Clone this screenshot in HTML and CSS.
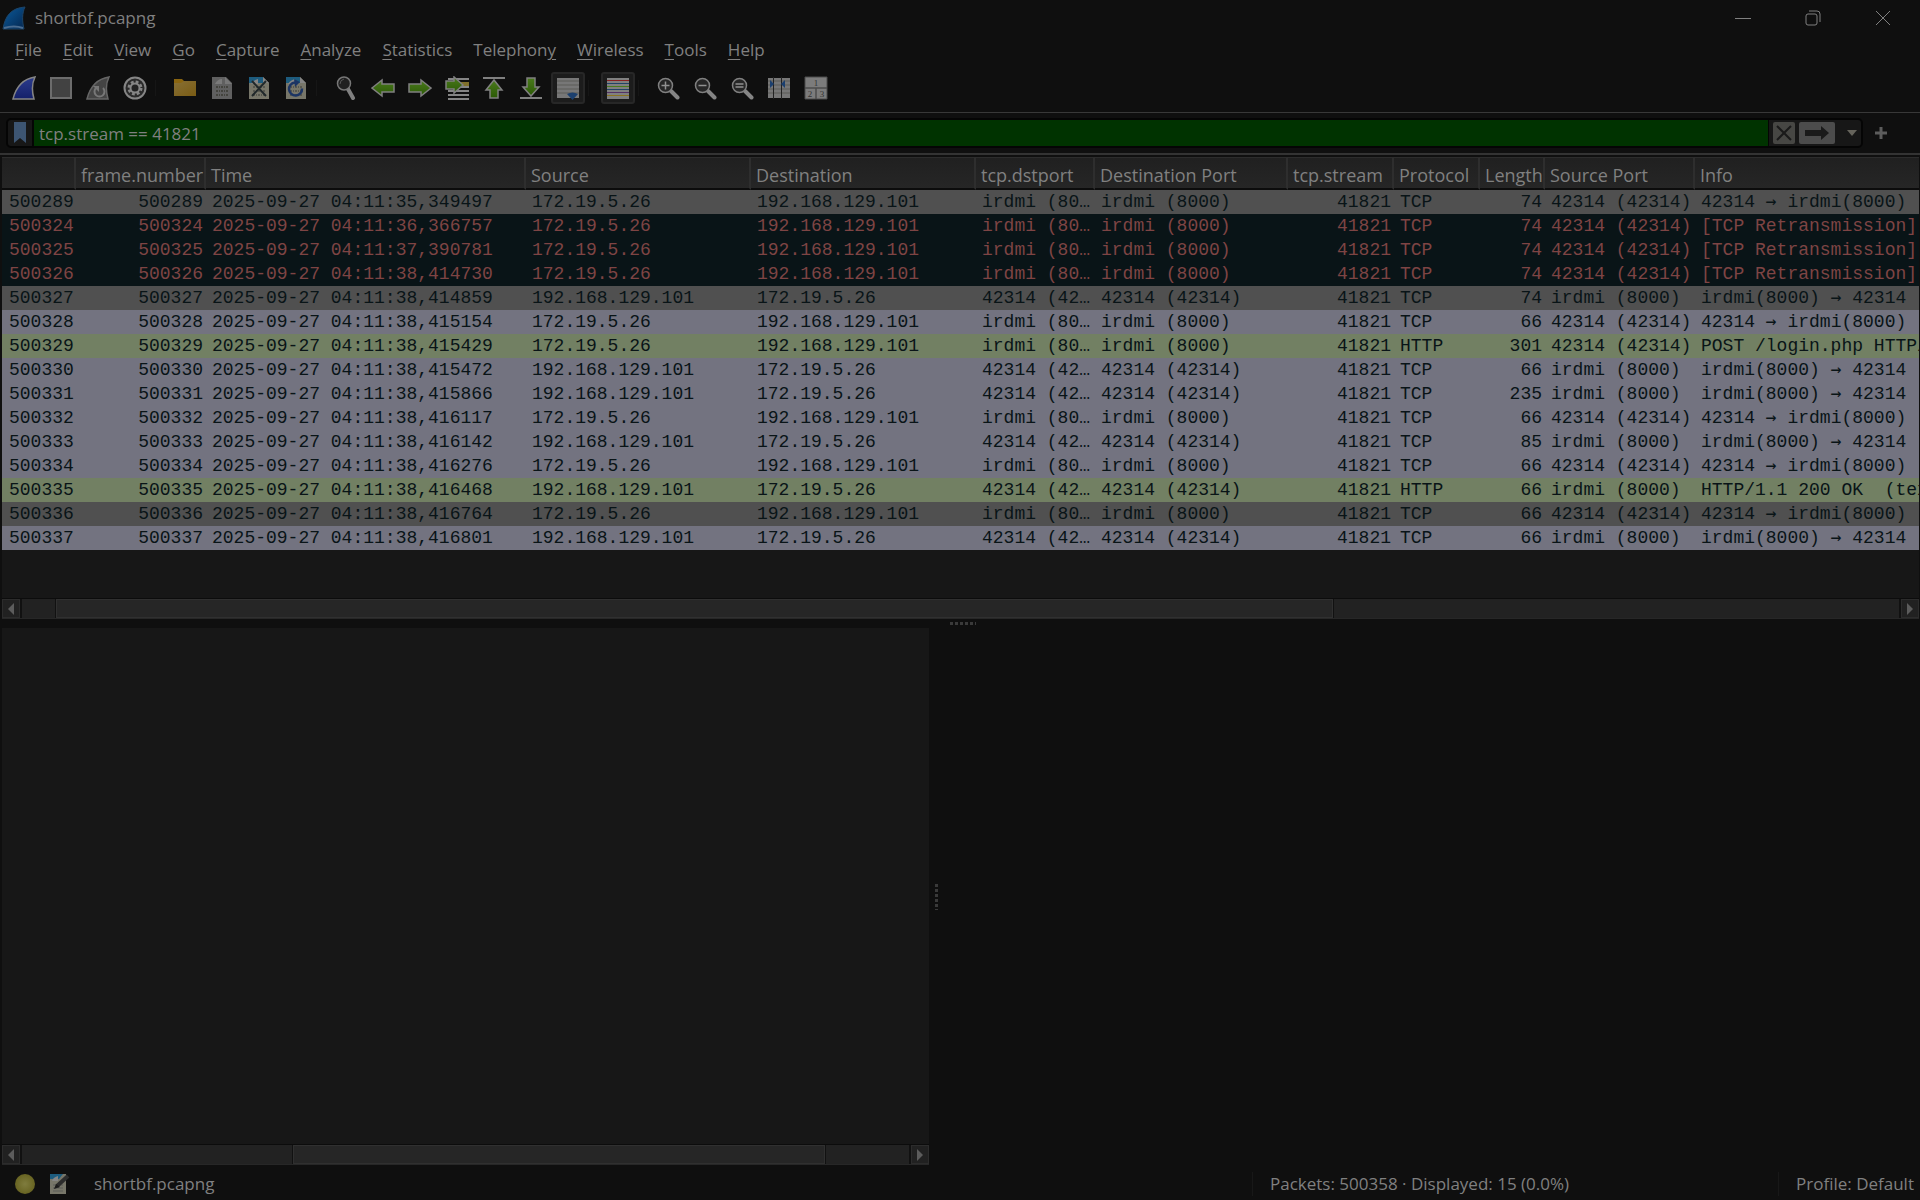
FILE: index.html
```html
<!DOCTYPE html>
<html lang="en">
<head>
<meta charset="utf-8">
<title>shortbf.pcapng</title>
<link rel="stylesheet" href="styles.css">
</head>
<body>
<svg class="defs" aria-hidden="true">
  <defs>
    <linearGradient id="gFin" x1="0" y1="0" x2="1" y2="1"><stop offset="0" stop-color="#0b5b9c"/><stop offset="1" stop-color="#04264f"/></linearGradient>
    <linearGradient id="gBlue" x1="0" y1="0" x2="0" y2="1"><stop offset="0" stop-color="#2c3c8c"/><stop offset="1" stop-color="#14206a"/></linearGradient>
    <linearGradient id="gGreen" x1="0" y1="0" x2="0" y2="1"><stop offset="0" stop-color="#4a7a1c"/><stop offset="1" stop-color="#2c5a06"/></linearGradient>
    <linearGradient id="gFolder" x1="0" y1="0" x2="1" y2="1"><stop offset="0" stop-color="#876f35"/><stop offset="1" stop-color="#7a5c14"/></linearGradient>
    <radialGradient id="gDot"><stop offset="0" stop-color="#7f7c3e"/><stop offset="1" stop-color="#686422"/></radialGradient>
    <g id="bits" fill="none" stroke="#44443e" stroke-width="2" stroke-dasharray="2 1 1 1"><path d="M6 11h13M6 15h13M6 19h13"/></g>
    <g id="lens"><path d="M15 15l6.500 6.500" stroke="#858585" stroke-width="4" stroke-linecap="round"/><circle cx="9.500" cy="9.500" r="7" fill="#262626" stroke="#808080" stroke-width="1.500"/></g>
  </defs>
</svg>

<header class="titlebar">
  <svg class="app-icon" viewBox="0 0 24 24"><path d="M1 23C3 10 9 2 23 1c-3 6-3 14-1 22z" fill="url(#gFin)" stroke="#1c4468"/><path d="M2 22c7-2 13-2 19 0" stroke="#4a6c90" stroke-width="2" fill="none"/></svg>
  <span class="title">shortbf.pcapng</span>
  <div class="window-buttons">
    <button aria-label="Minimize"><svg viewBox="0 0 16 16"><path d="M0 8.500h16"/></svg></button>
    <button aria-label="Restore"><svg viewBox="0 0 16 16"><rect x="1" y="4" width="11" height="11" rx="2"/><path d="M4 1h8q3 0 3 3v8"/></svg></button>
    <button aria-label="Close"><svg viewBox="0 0 16 16"><path d="M1 1l14 14M15 1L1 15"/></svg></button>
  </div>
</header>

<nav class="menubar">
  <button><u>F</u>ile</button><button><u>E</u>dit</button><button><u>V</u>iew</button><button><u>G</u>o</button><button><u>C</u>apture</button><button><u>A</u>nalyze</button><button><u>S</u>tatistics</button><button>Telephon<u>y</u></button><button><u>W</u>ireless</button><button><u>T</u>ools</button><button><u>H</u>elp</button>
</nav>

<div class="toolbar">
  <button aria-label="Start capture"><svg viewBox="0 0 24 24"><path d="M1 23C4 11 10 3 23 1c-3 6-3 15-1 22z" fill="url(#gBlue)" stroke="#858585" stroke-width="1.500"/></svg></button>
  <button aria-label="Stop capture"><svg viewBox="0 0 24 24"><rect x="2" y="2" width="20" height="20" fill="#424242" stroke="#6c6c6c" stroke-width="2"/></svg></button>
  <button aria-label="Restart capture"><svg viewBox="0 0 24 24"><path d="M1 23C4 11 10 3 23 1c-3 6-3 15-1 22z" fill="#444" stroke="#666" stroke-width="1.500"/><path d="M10 12a5 5 0 1 0 7 0" fill="none" stroke="#777" stroke-width="2"/><path d="M7 10h6v6z" fill="#777"/></svg></button>
  <button aria-label="Capture options"><svg viewBox="0 0 24 24"><circle cx="12" cy="12" r="10.500" fill="#2a2a2a" stroke="#858585" stroke-width="2"/><circle cx="12" cy="12" r="6" fill="none" stroke="#858585" stroke-width="3" stroke-dasharray="2.700 2"/><circle cx="12" cy="12" r="4.500" fill="#222" stroke="#858585" stroke-width="2"/></svg></button>
  <span class="sep"></span>
  <button aria-label="Open"><svg viewBox="0 0 24 24"><path d="M1 3h8l2 2v4H1z" fill="#8a6510"/><path d="M1 20V7h7l3-2h12v15z" fill="url(#gFolder)"/></svg></button>
  <button aria-label="Save"><svg viewBox="0 0 24 24"><path d="M2 1h14l6 6v16H2z" fill="#606060"/><path d="M15 1v7h7" fill="#777"/><path d="M5 8c1-3 4-5 7-5v5z" fill="#7a7a7a"/><use href="#bits"/></svg></button>
  <button aria-label="Close file"><svg viewBox="0 0 24 24"><path d="M2 1h14l6 6v16H2z" fill="#777669"/><path d="M2 1h14v6H2z" fill="#1d5c7e"/><path d="M16 1v6h6z" fill="#858585"/><path d="M4 8c2-3 4-4 7-5v5z" fill="#858585"/><use href="#bits" opacity=".6"/><path d="M5 5l14 15M19 5L5 20" stroke="#20282a" stroke-width="2"/></svg></button>
  <button aria-label="Reload file"><svg viewBox="0 0 24 24"><path d="M2 1h14l6 6v16H2z" fill="#777669"/><path d="M2 1h14v6H2z" fill="#1d5c7e"/><path d="M16 1v6h6z" fill="#858585"/><path d="M4 8c2-3 4-4 7-5v5z" fill="#858585"/><use href="#bits" opacity=".6"/><path d="M11 6.500a6.500 6.500 0 1 0 7 6" fill="none" stroke="#1c3564" stroke-width="2.500"/><path d="M10 3l6 3-5 5z" fill="#1c3564"/></svg></button>
  <span class="sep"></span>
  <button aria-label="Find"><svg viewBox="0 0 24 24"><path d="M14 13l5 9" stroke="#808080" stroke-width="4" stroke-linecap="round"/><circle cx="10" cy="7.500" r="6.500" fill="#202020" stroke="#777" stroke-width="1.500"/><path d="M6 8q0-4 4-5" stroke="#555" fill="none"/></svg></button>
  <button aria-label="Go back"><svg viewBox="0 0 24 24"><path d="M1 12l10-8v4h12v8H11v4z" fill="url(#gGreen)" stroke="#808080" stroke-width="1.500"/></svg></button>
  <button aria-label="Go forward"><svg viewBox="0 0 24 24"><path d="M23 12L13 4v4H1v8h12v4z" fill="url(#gGreen)" stroke="#808080" stroke-width="1.500"/></svg></button>
  <button aria-label="Go to packet"><svg viewBox="0 0 24 24"><path d="M3 3h21M3 7h21M3 11h21M3 15h21M3 19h21M3 23h21" stroke="#858585" stroke-width="2"/><path d="M15 6h9v4h-9z" fill="#80702c"/><path d="M18 9L9 1v4H1v8h8v4z" fill="url(#gGreen)" stroke="#808080" stroke-width="1.500"/></svg></button>
  <button aria-label="First packet"><svg viewBox="0 0 24 24"><path d="M1 2h22" stroke="#808080" stroke-width="2"/><path d="M12 4l8 10h-4v8H8v-8H4z" fill="url(#gGreen)" stroke="#808080" stroke-width="1.500"/></svg></button>
  <button aria-label="Last packet"><svg viewBox="0 0 24 24"><path d="M1 22h22" stroke="#808080" stroke-width="2"/><path d="M12 20l8-9h-4V2H8v9H4z" fill="url(#gGreen)" stroke="#808080" stroke-width="1.500"/></svg></button>
  <button class="checked" aria-label="Auto scroll" aria-pressed="true"><svg viewBox="0 0 24 24"><path d="M1 2h22v20H1z" fill="#777"/><path d="M1 5h22M1 9h22M1 13h22M1 17h22" stroke="#5c5c58"/><path d="M11 18q5.500-3 11 0l-5.500 6z" fill="#1b3f6e"/></svg></button>
  <span class="sep"></span>
  <button class="checked" aria-label="Colorize" aria-pressed="true"><svg viewBox="0 0 24 24"><path d="M1 2h22v21H1z" fill="#808080"/><path d="M1 4.500h22" stroke="#822"/><path d="M1 7.500h22" stroke="#246"/><path d="M1 10.500h22" stroke="#4a7a1c"/><path d="M1 13.500h22" stroke="#246"/><path d="M1 16.500h22" stroke="#536"/><path d="M1 19.500h22" stroke="#8a7320"/></svg></button>
  <span class="sep"></span>
  <button aria-label="Zoom in"><svg viewBox="0 0 24 24"><use href="#lens"/><path d="M5.500 9.500h8M9.500 5.500v8" stroke="#909090" stroke-width="1.500"/></svg></button>
  <button aria-label="Zoom out"><svg viewBox="0 0 24 24"><use href="#lens"/><path d="M5.500 9.500h8" stroke="#909090" stroke-width="1.500"/></svg></button>
  <button aria-label="Normal size"><svg viewBox="0 0 24 24"><use href="#lens"/><path d="M5.500 8h8M5.500 11h8" stroke="#909090" stroke-width="1.500"/></svg></button>
  <button aria-label="Resize columns"><svg viewBox="0 0 24 24"><path d="M1 2h22v20H1z" fill="#777"/><path d="M1 5h22M1 9h22M1 13h22M1 17h22" stroke="#5c5c58"/><path d="M6.500 1v22M14.500 1v22" stroke="#222"/><path d="M3 4l4 4-4 4zM18 4l-4 4 4 4z" fill="#1b3f6e"/></svg></button>
  <button aria-label="Layout"><svg viewBox="0 0 24 24"><path d="M1 1h22v11H1zM1 12h11v11H1zM12 12h11v11H12z" fill="#7c7c7c" stroke="#4c4c4c"/><text x="12" y="10">1</text><text x="6" y="21">2</text><text x="18" y="21">3</text></svg></button>
</div>

<div class="filterbar">
  <div class="filter-box">
    <button class="bookmark" aria-label="Saved filters"><svg viewBox="0 0 14 22"><path d="M1 0h12v21l-6-5-6 5z" fill="#3d5572"/></svg></button>
    <input type="text" value="tcp.stream == 41821" aria-label="Display filter" spellcheck="false">
    <button class="clear" aria-label="Clear filter"><svg viewBox="0 0 22 22"><path d="M4 4l14 14M18 4L4 18" stroke="#1a1a1a" stroke-width="2"/></svg></button>
    <button class="apply" aria-label="Apply filter"><svg viewBox="0 0 36 22"><path d="M6 8h16V4l8 7-8 7v-4H6z" fill="#1a1a1a"/></svg></button>
    <button class="recent" aria-label="Recent filters"><svg viewBox="0 0 10 6"><path d="M0 0h10L5 6z" fill="#66645c"/></svg></button>
  </div>
  <button class="add" aria-label="Add filter button"><svg viewBox="0 0 12 12"><path d="M0 6h12M6 0v12" stroke="#5c5c5c" stroke-width="3"/></svg></button>
</div>

<main class="panes">
  <section class="packet-pane">
    <div class="table-wrap">
      <table>
        <colgroup><col class="w-no"><col class="w-frame"><col class="w-time"><col class="w-addr"><col class="w-addr"><col class="w-dstport"><col class="w-destport"><col class="w-stream"><col class="w-proto"><col class="w-length"><col class="w-srcport"><col></colgroup>
        <thead><tr><th></th><th>frame.number</th><th>Time</th><th>Source</th><th>Destination</th><th>tcp.dstport</th><th>Destination Port</th><th>tcp.stream</th><th>Protocol</th><th>Length</th><th>Source Port</th><th>Info</th></tr></thead>
        <tbody>
          <tr class="syn"><td>500289</td><td class="r">500289</td><td>2025-09-27 04:11:35,349497</td><td>172.19.5.26</td><td>192.168.129.101</td><td>irdmi (80…</td><td>irdmi (8000)</td><td class="r">41821</td><td>TCP</td><td class="r">74</td><td>42314 (42314)</td><td class="info">42314 <span class="arrow">→</span> irdmi(8000)</td></tr>
          <tr class="bad"><td>500324</td><td class="r">500324</td><td>2025-09-27 04:11:36,366757</td><td>172.19.5.26</td><td>192.168.129.101</td><td>irdmi (80…</td><td>irdmi (8000)</td><td class="r">41821</td><td>TCP</td><td class="r">74</td><td>42314 (42314)</td><td class="info">[TCP Retransmission]</td></tr>
          <tr class="bad"><td>500325</td><td class="r">500325</td><td>2025-09-27 04:11:37,390781</td><td>172.19.5.26</td><td>192.168.129.101</td><td>irdmi (80…</td><td>irdmi (8000)</td><td class="r">41821</td><td>TCP</td><td class="r">74</td><td>42314 (42314)</td><td class="info">[TCP Retransmission]</td></tr>
          <tr class="bad"><td>500326</td><td class="r">500326</td><td>2025-09-27 04:11:38,414730</td><td>172.19.5.26</td><td>192.168.129.101</td><td>irdmi (80…</td><td>irdmi (8000)</td><td class="r">41821</td><td>TCP</td><td class="r">74</td><td>42314 (42314)</td><td class="info">[TCP Retransmission]</td></tr>
          <tr class="syn"><td>500327</td><td class="r">500327</td><td>2025-09-27 04:11:38,414859</td><td>192.168.129.101</td><td>172.19.5.26</td><td>42314 (42…</td><td>42314 (42314)</td><td class="r">41821</td><td>TCP</td><td class="r">74</td><td>irdmi (8000)</td><td class="info">irdmi(8000) <span class="arrow">→</span> 42314</td></tr>
          <tr class="tcp"><td>500328</td><td class="r">500328</td><td>2025-09-27 04:11:38,415154</td><td>172.19.5.26</td><td>192.168.129.101</td><td>irdmi (80…</td><td>irdmi (8000)</td><td class="r">41821</td><td>TCP</td><td class="r">66</td><td>42314 (42314)</td><td class="info">42314 <span class="arrow">→</span> irdmi(8000)</td></tr>
          <tr class="http"><td>500329</td><td class="r">500329</td><td>2025-09-27 04:11:38,415429</td><td>172.19.5.26</td><td>192.168.129.101</td><td>irdmi (80…</td><td>irdmi (8000)</td><td class="r">41821</td><td>HTTP</td><td class="r">301</td><td>42314 (42314)</td><td class="info">POST /login.php HTTP/</td></tr>
          <tr class="tcp"><td>500330</td><td class="r">500330</td><td>2025-09-27 04:11:38,415472</td><td>192.168.129.101</td><td>172.19.5.26</td><td>42314 (42…</td><td>42314 (42314)</td><td class="r">41821</td><td>TCP</td><td class="r">66</td><td>irdmi (8000)</td><td class="info">irdmi(8000) <span class="arrow">→</span> 42314</td></tr>
          <tr class="tcp"><td>500331</td><td class="r">500331</td><td>2025-09-27 04:11:38,415866</td><td>192.168.129.101</td><td>172.19.5.26</td><td>42314 (42…</td><td>42314 (42314)</td><td class="r">41821</td><td>TCP</td><td class="r">235</td><td>irdmi (8000)</td><td class="info">irdmi(8000) <span class="arrow">→</span> 42314</td></tr>
          <tr class="tcp"><td>500332</td><td class="r">500332</td><td>2025-09-27 04:11:38,416117</td><td>172.19.5.26</td><td>192.168.129.101</td><td>irdmi (80…</td><td>irdmi (8000)</td><td class="r">41821</td><td>TCP</td><td class="r">66</td><td>42314 (42314)</td><td class="info">42314 <span class="arrow">→</span> irdmi(8000)</td></tr>
          <tr class="tcp"><td>500333</td><td class="r">500333</td><td>2025-09-27 04:11:38,416142</td><td>192.168.129.101</td><td>172.19.5.26</td><td>42314 (42…</td><td>42314 (42314)</td><td class="r">41821</td><td>TCP</td><td class="r">85</td><td>irdmi (8000)</td><td class="info">irdmi(8000) <span class="arrow">→</span> 42314</td></tr>
          <tr class="tcp"><td>500334</td><td class="r">500334</td><td>2025-09-27 04:11:38,416276</td><td>172.19.5.26</td><td>192.168.129.101</td><td>irdmi (80…</td><td>irdmi (8000)</td><td class="r">41821</td><td>TCP</td><td class="r">66</td><td>42314 (42314)</td><td class="info">42314 <span class="arrow">→</span> irdmi(8000)</td></tr>
          <tr class="http"><td>500335</td><td class="r">500335</td><td>2025-09-27 04:11:38,416468</td><td>192.168.129.101</td><td>172.19.5.26</td><td>42314 (42…</td><td>42314 (42314)</td><td class="r">41821</td><td>HTTP</td><td class="r">66</td><td>irdmi (8000)</td><td class="info">HTTP/1.1 200 OK  (tex</td></tr>
          <tr class="syn"><td>500336</td><td class="r">500336</td><td>2025-09-27 04:11:38,416764</td><td>172.19.5.26</td><td>192.168.129.101</td><td>irdmi (80…</td><td>irdmi (8000)</td><td class="r">41821</td><td>TCP</td><td class="r">66</td><td>42314 (42314)</td><td class="info">42314 <span class="arrow">→</span> irdmi(8000)</td></tr>
          <tr class="tcp"><td>500337</td><td class="r">500337</td><td>2025-09-27 04:11:38,416801</td><td>192.168.129.101</td><td>172.19.5.26</td><td>42314 (42…</td><td>42314 (42314)</td><td class="r">41821</td><td>TCP</td><td class="r">66</td><td>irdmi (8000)</td><td class="info">irdmi(8000) <span class="arrow">→</span> 42314</td></tr>
        </tbody>
      </table>
    </div>
    <div class="scrollbar list-scroll">
      <button aria-label="Scroll left"><svg viewBox="0 0 6 12"><path d="M6 0v12L0 6z"/></svg></button>
      <div class="track"><span class="before"></span><span class="thumb"></span><span class="after"></span></div>
      <button aria-label="Scroll right"><svg viewBox="0 0 6 12"><path d="M0 0v12l6-6z"/></svg></button>
    </div>
  </section>
  <div class="split-h"><span class="grip"></span></div>
  <section class="lower">
    <div class="detail-pane">
      <div class="detail-tree"></div>
      <div class="scrollbar detail-scroll">
        <button aria-label="Scroll left"><svg viewBox="0 0 6 12"><path d="M6 0v12L0 6z"/></svg></button>
        <div class="track"><span class="before"></span><span class="thumb"></span><span class="after"></span></div>
        <button aria-label="Scroll right"><svg viewBox="0 0 6 12"><path d="M0 0v12l6-6z"/></svg></button>
      </div>
    </div>
    <div class="split-v"><span class="grip"></span></div>
    <div class="bytes-pane"></div>
  </section>
</main>

<footer class="statusbar">
  <div class="status-file">
    <button aria-label="Expert information"><svg viewBox="0 0 22 22"><circle cx="11" cy="11" r="10" fill="url(#gDot)"/></svg></button>
    <button aria-label="Capture comment"><svg viewBox="0 0 22 22"><path d="M1 1h16v20H1z" fill="#777669"/><path d="M1 1h13l-4 5H1z" fill="#1d5c7e"/><path d="M3 8c1-3 3-4 6-5v5z" fill="#858585"/><path d="M4 12h10M4 15h10M4 18h10" stroke="#5c5c58"/><path d="M8 13L19 3" stroke="#2c2c2c" stroke-width="4"/><path d="M5 16l2-5 4 3z" fill="#1c1c1c"/></svg></button>
    <span>shortbf.pcapng</span>
  </div>
  <div class="status-packets">Packets: 500358 · Displayed: 15 (0.0%)</div>
  <button class="status-profile">Profile: Default</button>
</footer>
</body>
</html>
```
FILE: styles.css
```css
* { box-sizing: border-box; }

body {
  margin: 0;
  height: 100vh;
  display: flex;
  flex-direction: column;
  overflow: hidden;
  background: #0f0f0f;
  color: #808080;
  font-family: "Open Sans", "Noto Sans", sans-serif;
  font-size: 17px;
  line-height: 24px;
}

.defs { position: absolute; width: 0; height: 0; }

button {
  margin: 0;
  padding: 0;
  border: 0;
  background: none;
  color: inherit;
  font: inherit;
}

svg { display: block; }

/* Title bar */
.titlebar { display: flex; align-items: center; height: 34px; flex: none; padding: 1px 2px 0; }
.app-icon { width: 24px; height: 24px; }
.title { margin-left: 9px; }
.window-buttons { display: flex; margin-left: auto; }
.window-buttons button { width: 70px; height: 32px; display: grid; place-items: center; }
.window-buttons svg { width: 16px; height: 16px; fill: none; stroke: #808080; }

/* Menu */
.menubar { display: flex; align-items: center; height: 32px; flex: none; padding-left: 4px; }
.menubar button { padding: 0 10px 0 11px; }
.menubar u { text-underline-offset: 3px; text-decoration-thickness: 1px; }

/* Main toolbar */
.toolbar {
  display: flex;
  align-items: center;
  gap: 3px;
  height: 47px;
  flex: none;
  padding: 0 0 2px 7px;
  border-bottom: 1px solid #383838;
}
.toolbar button { width: 34px; height: 32px; display: grid; place-items: center; border-radius: 3px; }
.toolbar svg { width: 24px; height: 24px; }
.toolbar text { font: 9px "Liberation Serif", serif; fill: #333; text-anchor: middle; }
.toolbar .checked { background: #1c1c1c; border: 2px solid #272727; }
.sep { width: 10px; height: 16px; border-left: 1px solid #161616; }

/* Display filter */
.filterbar {
  display: flex;
  align-items: center;
  height: 42px;
  flex: none;
  padding-left: 6px;
  border-bottom: 2px solid #333;
}
.filter-box {
  flex: 1;
  display: flex;
  align-items: center;
  height: 30px;
  border: 2px solid #050505;
  border-radius: 5px;
  background: #171717;
  overflow: hidden;
}
.filter-box input {
  flex: 1;
  min-width: 0;
  height: 26px;
  padding: 0 5px;
  border: 0;
  border-right: 1px solid #050505;
  background: #003300;
  color: #808080;
  font: inherit;
  outline: 0;
}
.bookmark { width: 26px; height: 26px; display: grid; place-items: center; border-right: 2px solid #050505; }
.bookmark svg { width: 14px; height: 22px; }
.clear { margin-left: 4px; background: #474744; border-radius: 2px; }
.clear svg { width: 22px; height: 22px; }
.apply { margin-left: 4px; background: #4c4c4c; border-radius: 2px; }
.apply svg { width: 36px; height: 22px; }
.recent { width: 26px; height: 26px; padding-left: 12px; }
.recent svg { width: 10px; height: 6px; }
.add { width: 57px; padding-left: 12px; }
.add svg { width: 12px; height: 12px; }

/* Panes */
.panes { flex: 1; min-height: 0; display: flex; flex-direction: column; padding-top: 2px; }
.packet-pane {
  flex: 462 1 0;
  min-height: 0;
  display: flex;
  flex-direction: column;
  margin: 0 1px 0 2px;
  background: #171717;
}
.table-wrap { flex: 1; min-height: 0; overflow: hidden; }

table { width: 100%; table-layout: fixed; border-collapse: separate; border-spacing: 0; }
th {
  height: 33px;
  padding: 3px 0 0 5px;
  border-top: 1px solid #2c2c2c;
  border-right: 2px solid #2e2e2e;
  border-bottom: 2px solid #0c0c0c;
  background: linear-gradient(#202020, #262626);
  font-size: 18px;
  font-weight: 400;
  line-height: 24px;
  text-align: left;
  white-space: nowrap;
}
th:last-child { border-right: 0; }
td {
  height: 24px;
  padding: 0 0 0 6px;
  overflow: hidden;
  font: 18px/24px "Liberation Mono", monospace;
  white-space: pre;
}
td:first-child { padding-left: 7px; }
.r { text-align: right; padding-right: 3px; }
.arrow { font-family: "DejaVu Sans Mono", monospace; line-height: 20px; }

.w-no { width: 74px; }
.w-frame { width: 130px; }
.w-time { width: 320px; }
.w-addr { width: 225px; }
.w-dstport { width: 119px; }
.w-destport { width: 193px; }
.w-stream { width: 106px; }
.w-proto { width: 86px; }
.w-length { width: 65px; }
.w-srcport { width: 150px; }

tbody { color: #091417; }
.syn { background: #505050; }
.bad { background: #091417; color: #7e4444; }
.tcp { background: #737380; }
.http { background: #728063; }

/* Scroll bars */
.scrollbar { display: flex; gap: 2px; height: 21px; flex: none; border-top: 1px solid #0c0c0c; border-bottom: 1px solid #272727; background: #111; }
.scrollbar button { width: 18px; display: grid; place-items: center; border: 1px solid #2c2c2c; background: #212121; }
.scrollbar svg { width: 6px; height: 12px; fill: #5c5c5c; }
.track { flex: 1; display: flex; gap: 1px; }
.before, .after { background: #222; }
.thumb { background: #262626; border: 1px solid #303030; }
.list-scroll .before { flex: 33; }
.list-scroll .thumb { flex: 1276; }
.list-scroll .after { flex: 565; }
.detail-scroll .before { flex: 270; }
.detail-scroll .thumb { flex: 531; }
.detail-scroll .after { flex: 83; }

/* Splitters */
.split-h { height: 9px; flex: none; display: grid; place-items: center; padding-left: 5px; }
.split-h .grip { width: 26px; height: 3px; background: repeating-linear-gradient(90deg, #3a3a3a 0 3px, transparent 3px 5px); }
.split-v { width: 15px; flex: none; display: grid; place-items: center; }
.split-v .grip { width: 3px; height: 26px; background: repeating-linear-gradient(#3a3a3a 0 3px, transparent 3px 5px); }

.lower { flex: 537 1 0; min-height: 0; display: flex; }
.detail-pane { flex: 927 1 0; display: flex; flex-direction: column; margin-left: 2px; background: #171717; }
.detail-tree { flex: 1; }
.bytes-pane { flex: 976 1 0; }

/* Status bar */
.statusbar { display: flex; align-items: center; height: 35px; flex: none; padding-top: 2px; }
.status-file { flex: 1; display: flex; align-items: center; gap: 13px; padding-left: 14px; }
.status-file svg { width: 22px; height: 22px; }
.status-file span { margin-left: 10px; }
.status-packets, .status-profile { padding-left: 17px; border-left: 1px solid #181818; text-align: left; white-space: nowrap; }
.status-packets { width: 526px; }
.status-profile { width: 142px; }
```
